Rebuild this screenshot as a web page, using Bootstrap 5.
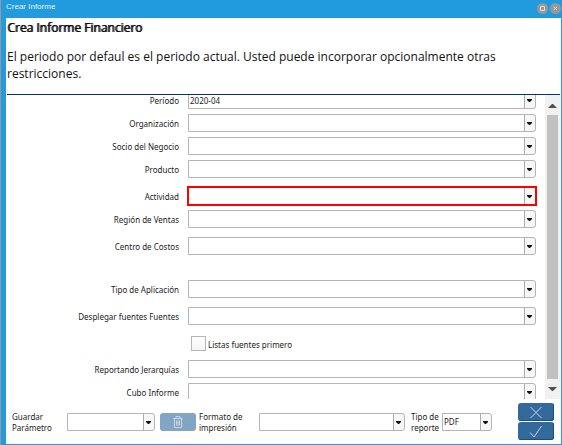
<!DOCTYPE html>
<html lang="es">
<head>
<meta charset="utf-8">
<meta name="viewport" content="width=device-width, initial-scale=1">
<title>Crear Informe</title>
<link href="https://cdn.jsdelivr.net/npm/bootstrap@5.3.0/dist/css/bootstrap.min.css" rel="stylesheet">
<style>
body{font-family:"Noto Sans","Open Sans",sans-serif;font-size:8px;line-height:11px;color:#222;background:#fff}
.win{border:solid #219bde;border-width:0 1px 1px 5px;box-shadow:-1px 0 #999;margin-left:1px}
.win-title{background:#219bde;color:#e4f3fc;height:18px;font:8px/14px "Liberation Sans",Arial,sans-serif}
.win-btns{gap:2px}
.win-btn{width:11px;height:11px;border:0;border-radius:50%;background:#999;margin-top:3px}
.win-btn svg,.act svg{display:block;margin:auto}
.intro{border-bottom:1px solid #003764;height:77px;color:#111;font-family:"Open Sans",sans-serif;font-size:12px;line-height:17px;margin:0 1px}
.intro h1{font-size:12px;line-height:17px;font-weight:400;text-shadow:1px 0 currentColor;margin-bottom:12px;padding-top:1px}
.fields{margin-top:-4px;padding-right:9px}
.fr{margin-bottom:5px;gap:9px}
.fr.gap-b{margin-bottom:9px}
.fr.gap-c{margin-bottom:11px}
.fr.gap-l{margin-bottom:25px}
.fr>label,.lab-space{width:173px;flex:none;text-align:right}
.fr>label{padding-top:1px}
.sel{appearance:none;display:block;width:100%;height:18px;border:1px solid #b5b5b5;border-radius:0 3px 3px 0;padding:0 14px 0 1px;font-size:8px;line-height:11px;color:#222;
background:#fff url("data:image/svg+xml,%3Csvg xmlns='http://www.w3.org/2000/svg' width='11' height='16'%3E%3Cpath d='M0 0h11v16H0z' fill='%23f7f7f7'/%3E%3Cpath d='M0 0h1v16H0z' fill='%23aaa'/%3E%3Cpath d='M3 7h5v1L6 10H5L3 8z' fill='%23111'/%3E%3C/svg%3E") right top/11px 16px no-repeat}
.sel.hot{outline:2px solid #f00;outline-offset:-1px;border-color:#f00;border-radius:0}
.chk{appearance:none;width:15px;height:15px;border:1px solid #b5b5b5;margin:0;background:linear-gradient(#fff,#f4f4f4)}
.chk-cell{padding-left:3px;gap:2px}
.chk-cell label{padding-top:2px}
.sbar{width:15px;margin-right:1px;background:#f1f1f1;flex:none}
.sbar button{border:0;background:none;padding:0;height:20px}
.sbar svg{display:block;margin:auto}
.thumb{background:#c1c1c1;width:11px}
.foot{height:45px;padding:0 7px 0 6px}
.act{width:36px;height:18px;border:0;border-radius:3px;background:#336a9b;padding:0;box-shadow:inset -1px -1px #17507f}
.act.off{background:#82a5c4;box-shadow:none}
.acts{gap:1px;margin-left:26px}
.del{margin:0 3px 0 5px}
.w-a{width:55px}.w-b{width:88px}.w-c{width:60px}.w-d{width:31px}.w-e{width:50px}
.lab-r{margin-left:6px}
</style>
<script src="https://cdn.jsdelivr.net/npm/bootstrap@5.3.0/dist/js/bootstrap.bundle.min.js"></script>
</head>
<body>
<main class="win vh-100 d-flex flex-column">
<header class="win-title d-flex flex-shrink-0">
<span class="flex-grow-1">Crear Informe</span>
<div class="win-btns d-flex">
<button class="win-btn p-0" aria-label="Maximizar"><svg width="11" height="11"><path d="M3.500 3.500h4v4h-4z" fill="none" stroke="#ddd"/></svg></button>
<button class="win-btn p-0" aria-label="Cerrar"><svg width="11" height="11"><path d="M4 4l3 3M7 4l-3 3" stroke="#ddd"/></svg></button>
</div>
</header>
<section class="intro flex-shrink-0"><h1>Crea Informe Financiero</h1><p class="mb-0">El periodo por defaul es el periodo actual. Usted puede incorporar opcionalmente otras restricciones.</p></section>
<section class="d-flex flex-grow-1 overflow-hidden">
<div class="flex-grow-1 overflow-hidden">
<form class="fields">
<div class="fr d-flex align-items-center"><label for="f1">Período</label><div class="flex-grow-1"><select id="f1" class="sel"><option>2020-04</option></select></div></div>
<div class="fr d-flex align-items-center"><label for="f2">Organización</label><div class="flex-grow-1"><select id="f2" class="sel"></select></div></div>
<div class="fr d-flex align-items-center"><label for="f3">Socio del Negocio</label><div class="flex-grow-1"><select id="f3" class="sel"></select></div></div>
<div class="fr gap-b d-flex align-items-center"><label for="f4">Producto</label><div class="flex-grow-1"><select id="f4" class="sel"></select></div></div>
<div class="fr d-flex align-items-center"><label for="f5">Actividad</label><div class="flex-grow-1"><select id="f5" class="sel hot"></select></div></div>
<div class="fr gap-b d-flex align-items-center"><label for="f6">Región de Ventas</label><div class="flex-grow-1"><select id="f6" class="sel"></select></div></div>
<div class="fr gap-l d-flex align-items-center"><label for="f7">Centro de Costos</label><div class="flex-grow-1"><select id="f7" class="sel"></select></div></div>
<div class="fr gap-b d-flex align-items-center"><label for="f8">Tipo de Aplicación</label><div class="flex-grow-1"><select id="f8" class="sel"></select></div></div>
<div class="fr gap-c d-flex align-items-center"><label for="f9">Desplegar fuentes Fuentes</label><div class="flex-grow-1"><select id="f9" class="sel"></select></div></div>
<div class="fr gap-b d-flex"><span class="lab-space"></span><div class="chk-cell d-flex align-items-center"><input type="checkbox" id="f10" class="chk"><label for="f10">Listas fuentes primero</label></div></div>
<div class="fr d-flex align-items-center"><label for="f11">Reportando Jerarquías</label><div class="flex-grow-1"><select id="f11" class="sel"></select></div></div>
<div class="fr d-flex align-items-center"><label for="f12">Cubo Informe</label><div class="flex-grow-1"><select id="f12" class="sel"></select></div></div>
</form>
</div>
<div class="sbar d-flex flex-column align-items-center">
<button aria-label="Subir"><svg width="9" height="5"><path d="M0 5l4-4h1l4 4z" fill="#505050"/></svg></button>
<div class="thumb flex-grow-1"></div>
<button aria-label="Bajar"><svg width="9" height="5"><path d="M0 0h9L5 4H4z" fill="#505050"/></svg></button>
</div>
</section>
<footer class="foot d-flex align-items-center flex-shrink-0">
<label for="g1" class="w-a">Guardar Parámetro</label>
<select id="g1" class="sel w-b"></select>
<button class="act off del" aria-label="Eliminar"><svg width="12" height="14" fill="none" stroke="#c4d5e4"><path d="M1 3.500h10M4 3V1.500h4V3M2.500 4v8.500h7V4M4.500 5.500v5M6 5.500v5M7.500 5.500v5"/></svg></button>
<label for="g2" class="w-c">Formato de impresión</label>
<select id="g2" class="sel flex-grow-1 w-auto"></select>
<label for="g3" class="w-d lab-r">Tipo de reporte</label>
<select id="g3" class="sel w-e"><option>PDF</option></select>
<div class="acts d-flex flex-column">
<button class="act" aria-label="Cancelar"><svg width="14" height="13" fill="none" stroke="#c2d6e8"><path d="M1.500 1l11 11M12.500 1l-11 11"/></svg></button>
<button class="act" aria-label="Aceptar"><svg width="14" height="13" fill="none" stroke="#c2d6e8"><path d="M1 7.500l4 4.500L12.500 1"/></svg></button>
</div>
</footer>
</main>
</body>
</html>
